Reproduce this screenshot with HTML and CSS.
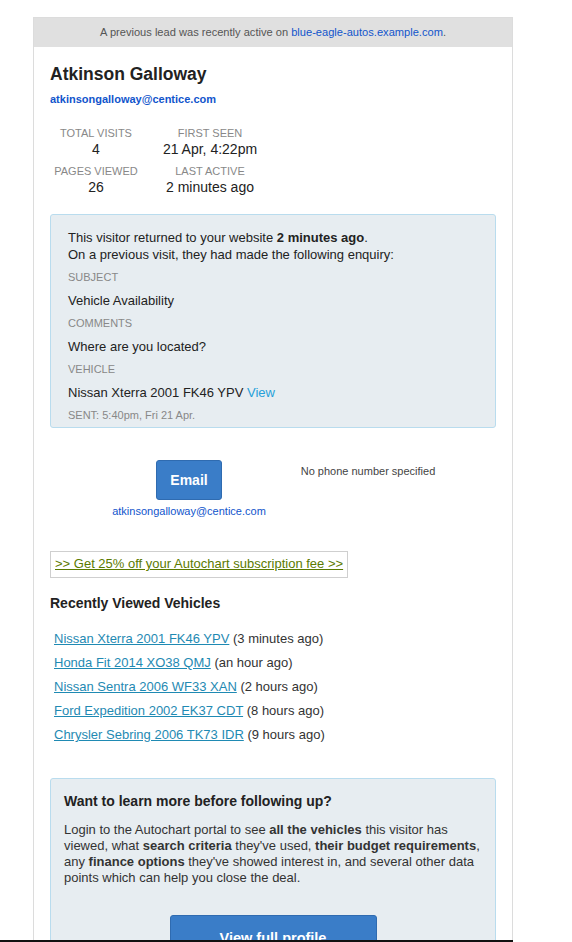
FILE: index.html
```html
<!DOCTYPE html>
<html lang="en">
<head>
    <meta charset="UTF-8">
    <meta name="viewport" content="width=device-width, initial-scale=1.0">
    <title>Returning Lead - Atkinson Galloway</title>
    <link rel="stylesheet" href="styles.css">
</head>
<body>

<div class="wrap">
    <div class="notice">A previous lead was recently active on <a href="#">blue-eagle-autos.example.com</a>.</div>

    <div class="content">
        <h1 class="lead-name">Atkinson Galloway</h1>
        <a class="lead-email" href="#">atkinsongalloway@centice.com</a>

        <div class="stats">
            <div class="stat">
                <div class="stat-label">TOTAL VISITS</div>
                <div class="stat-value">4</div>
            </div>
            <div class="stat">
                <div class="stat-label">FIRST SEEN</div>
                <div class="stat-value">21 Apr, 4:22pm</div>
            </div>
            <div class="stat">
                <div class="stat-label">PAGES VIEWED</div>
                <div class="stat-value">26</div>
            </div>
            <div class="stat">
                <div class="stat-label">LAST ACTIVE</div>
                <div class="stat-value">2 minutes ago</div>
            </div>
        </div>

        <div class="enquiry">
            <p class="intro">This visitor returned to your website <b>2 minutes ago</b>.<br>On a previous visit, they had made the following enquiry:</p>
            <div class="field-label">SUBJECT</div>
            <div class="field-value">Vehicle Availability</div>
            <div class="field-label">COMMENTS</div>
            <div class="field-value">Where are you located?</div>
            <div class="field-label">VEHICLE</div>
            <div class="field-value">Nissan Xterra 2001 FK46 YPV <a class="view-link" href="#">View</a></div>
            <div class="sent">SENT: 5:40pm, Fri 21 Apr.</div>
        </div>

        <div class="contact">
            <div class="contact-cell">
                <a class="btn btn-email" href="#">Email</a>
                <a class="contact-email" href="#">atkinsongalloway@centice.com</a>
            </div>
            <div class="contact-cell">
                <span class="no-phone">No phone number specified</span>
            </div>
        </div>

        <div class="promo">
            <a href="#">&gt;&gt; Get 25% off your Autochart subscription fee &gt;&gt;</a>
        </div>

        <h2 class="section-title">Recently Viewed Vehicles</h2>
        <ul class="viewed">
            <li><a href="#">Nissan Xterra 2001 FK46 YPV</a> (3 minutes ago)</li>
            <li><a href="#">Honda Fit 2014 XO38 QMJ</a> (an hour ago)</li>
            <li><a href="#">Nissan Sentra 2006 WF33 XAN</a> (2 hours ago)</li>
            <li><a href="#">Ford Expedition 2002 EK37 CDT</a> (8 hours ago)</li>
            <li><a href="#">Chrysler Sebring 2006 TK73 IDR</a> (9 hours ago)</li>
        </ul>

        <div class="learn">
            <h3>Want to learn more before following up?</h3>
            <p>Login to the Autochart portal to see <b>all the vehicles</b> this visitor has viewed, what <b>search criteria</b> they've used, <b>their budget requirements</b>, any <b>finance options</b> they've showed interest in, and several other data points which can help you close the deal.</p>
            <div class="learn-action">
                <a class="btn btn-profile" href="#">View full profile</a>
            </div>
        </div>
    </div>
</div>

<div class="screen-edge"></div>

</body>
</html>
```

FILE: styles.css
```css
body { margin: 0; padding: 0; background: #fff; font-family: "Liberation Sans", Arial, sans-serif; color: #222; }
a { color: #1155cc; text-decoration: none; }

.wrap { width: 480px; box-sizing: border-box; margin: 17px 0 0 33px; border: 1px solid #dcdcdc; }
.notice { background: #e0e0e0; height: 29px; line-height: 29px; text-align: center; font-size: 11.1px; color: #555; }

.content { padding: 16px 16px 40px; }
.lead-name { margin: 0; font-size: 17.5px; line-height: 22px; font-weight: bold; color: #222; }
.lead-email { display: block; margin-top: 7px; font-size: 11px; line-height: 14px; font-weight: bold; }

.stats { display: grid; grid-template-columns: 92px 136px; margin-top: 17px; }
.stat { text-align: center; padding: 3px 0; }
.stat-label { font-size: 11px; line-height: 14px; color: #888; }
.stat-value { font-size: 14px; line-height: 18px; color: #222; }

.enquiry { margin-top: 15px; background: #e7edf1; border: 1px solid #b9dcee; border-radius: 3px; padding: 14px 17px 0; font-size: 13px; }
.intro { margin: 0 0 3px; line-height: 17px; }
.field-label { font-size: 11px; line-height: 23px; color: #888; }
.field-value { line-height: 23px; }
.view-link { color: #259fd9; }
.sent { font-size: 11px; line-height: 23px; color: #888; }

.contact { display: grid; grid-template-columns: 178px 180px; margin: 32px 0 0 50px; }
.contact-cell { text-align: center; }
.btn { display: inline-block; background: #3a7dc8; border: 1px solid #2f6bb0; border-radius: 3px; color: #fff; font-weight: bold; font-size: 14px; line-height: 18px; }
.btn-email { padding: 10px 13px; }
.contact-email { display: block; margin-top: 4px; font-size: 11px; line-height: 14px; }
.no-phone { display: block; padding-top: 4px; font-size: 11px; line-height: 14px; color: #444; }

.promo { display: inline-block; margin-top: 33px; border: 1px solid #cfcfcf; padding: 4px 4px 5px; font-size: 13px; line-height: 16px; }
.promo a { color: #5b7a00; text-decoration: underline; }

.section-title { margin: 16px 0 0; font-size: 14px; line-height: 18px; font-weight: bold; color: #222; }
.viewed { list-style: none; margin: 15px 0 0; padding: 0 0 0 4px; font-size: 13px; line-height: 24px; color: #333; }
.viewed a { color: #1f8ab3; text-decoration: underline; }

.learn { margin-top: 31px; background: #e7edf1; border: 1px solid #b9dcee; border-radius: 3px; padding: 13px 13px 30px; }
.learn h3 { margin: 0; font-size: 14px; line-height: 18px; font-weight: bold; color: #222; }
.learn p { margin: 12px 0 0; font-size: 13px; line-height: 16px; color: #333; }
.learn-action { margin-top: 29px; text-align: center; }
.btn-profile { width: 205px; padding: 13px 0; font-size: 14.5px; }

.screen-edge { position: fixed; left: 0; bottom: 0; width: 513px; height: 2px; background: #111; }
```
